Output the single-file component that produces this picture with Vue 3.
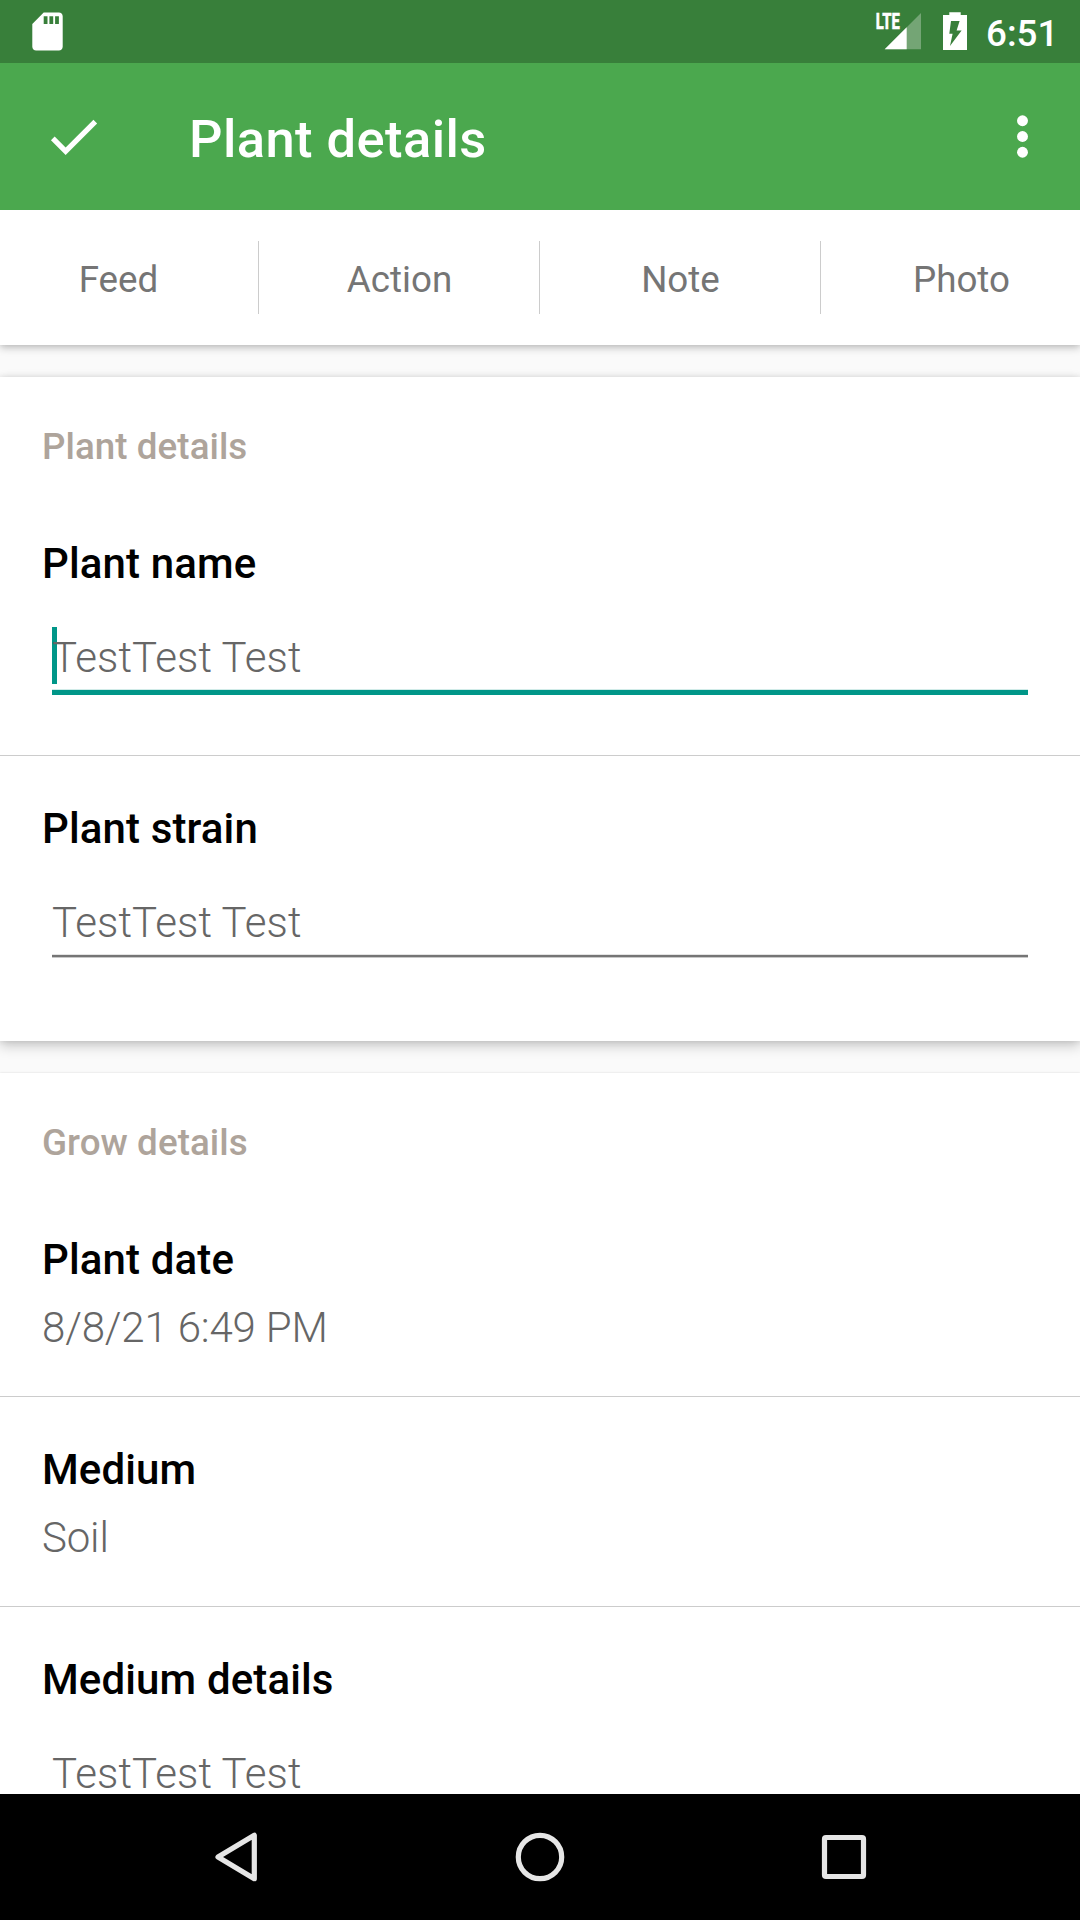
<script setup>
const tabs = ['Feed', 'Action', 'Note', 'Photo']

const sections = [
  {
    title: 'Plant details',
    rows: [
      { label: 'Plant name', value: 'TestTest Test', input: true, focused: true },
      { label: 'Plant strain', value: 'TestTest Test', input: true },
    ],
  },
  {
    title: 'Grow details',
    rows: [
      { label: 'Plant date', value: '8/8/21 6:49 PM' },
      { label: 'Medium', value: 'Soil' },
      { label: 'Medium details', value: 'TestTest Test', input: true },
    ],
  },
]
</script>

<template>
  <div class="screen">
    <header class="status">
      <svg class="sd" viewBox="0 0 46 46">
        <path
          transform="translate(.7 -.3) scale(1.9)"
          d="M18 2h-8L4 8v12c0 1.1.9 2 2 2h12c1.1 0 2-.9 2-2V4c0-1.1-.9-2-2-2zm-6 6h-2V4h2v4zm3 0h-2V4h2v4zm3 0h-2V4h2v4z"
          fill="#fff"
        />
      </svg>
      <div class="indicators">
        <svg class="signal" width="46" height="63" viewBox="0 0 46 63">
          <path d="M46 13V49.3H9.7z" fill="#fff" fill-opacity=".3" />
          <path d="M31.7 27.3V49.3H9.7z" fill="#fff" />
          <text x=".8" y="29" textLength="24" lengthAdjust="spacingAndGlyphs" class="lte">LTE</text>
        </svg>
        <svg class="battery" width="24" height="63" viewBox="0 0 24 63">
          <path fill-rule="evenodd" fill="#fff" d="M6.3 12.3h11.4V15H24v35H0V15h6.300zM8 21L6.3 33.7h3.3L7 46 18.600 30.6h-5L16.600 21z" />
        </svg>
        <span class="clock">6:51</span>
      </div>
    </header>

    <div class="toolbar">
      <svg class="icon" viewBox="0 0 24 24">
        <path d="M9 16.17L4.83 12l-1.42 1.41L9 19 21 7l-1.41-1.41z" fill="#fff" />
      </svg>
      <h1>Plant details</h1>
      <svg class="icon" viewBox="0 0 24 24">
        <g fill="#fff">
          <circle cx="12" cy="6" r="2.08" />
          <circle cx="12" cy="12" r="2.08" />
          <circle cx="12" cy="18" r="2.08" />
        </g>
      </svg>
    </div>

    <nav class="tabs">
      <div v-for="tab in tabs" :key="tab" class="tab">{{ tab }}</div>
    </nav>

    <main class="content">
      <section v-for="section in sections" :key="section.title" class="card">
        <h2>{{ section.title }}</h2>
        <div v-for="row in section.rows" :key="row.label" class="row">
          <div class="label">{{ row.label }}</div>
          <div v-if="row.input" class="field" :class="{ focused: row.focused }">
            <span class="value">{{ row.value }}</span>
          </div>
          <div v-else class="value plain">{{ row.value }}</div>
        </div>
      </section>
    </main>

    <footer class="navbar">
      <svg width="60" height="60" viewBox="0 0 60 60">
        <path d="M48.300 8.300V51.700L12 30z" />
      </svg>
      <svg width="60" height="60" viewBox="0 0 60 60">
        <circle cx="30" cy="30" r="21.7" />
      </svg>
      <svg width="60" height="60" viewBox="0 0 60 60">
        <rect x="10.5" y="10.5" width="39" height="39" rx="1.5" />
      </svg>
    </footer>
  </div>
</template>

<style>
body {
  background: #fafafa;
}
</style>

<style scoped>
.screen {
  width: 1080px;
  height: 1920px;
  display: flex;
  flex-direction: column;
  overflow: hidden;
  background: #fafafa;
  font-family: Roboto, sans-serif;
}

.status {
  flex: none;
  height: 63px;
  display: flex;
  justify-content: space-between;
  background: #387f3a;
}

.sd {
  width: 46px;
  height: 46px;
  margin: 9px 0 0 24px;
}

.indicators {
  display: flex;
  padding-right: 22px;
}

.signal {
  margin-right: 22px;
}

.battery {
  margin-right: 19px;
}

.lte {
  font-size: 22px;
  font-weight: 800;
  fill: #fff;
  stroke: #fff;
  stroke-width: 0.5;
}

.clock {
  width: 72px;
  font-size: 36.75px;
  font-weight: 500;
  line-height: 67px;
  white-space: nowrap;
  color: #fff;
}

.toolbar {
  position: relative;
  z-index: 1;
  flex: none;
  height: 147px;
  display: flex;
  align-items: center;
  padding: 0 26px 0 42px;
  background: #4ba84e;
}

.icon {
  width: 63px;
  height: 63px;
}

h1 {
  flex: 1;
  margin: 0 0 0 84px;
  padding-top: 5px;
  font-size: 52.5px;
  font-weight: 500;
  line-height: 62px;
  letter-spacing: 0.42px;
  color: #fff;
}

.tabs {
  flex: none;
  height: 135px;
  display: flex;
  align-items: center;
  background: #fff;
  box-shadow: 0 3px 8px rgba(0, 0, 0, 0.21), 0 0 6px rgba(0, 0, 0, 0.1);
}

.tab {
  flex: none;
  width: 280px;
  height: 73px;
  text-align: center;
  font-size: 36.75px;
  line-height: 77px;
  text-indent: 1px;
  color: #757575;
  border-left: 1px solid #ccc;
}

.tab:first-child {
  margin-left: -23px;
}

.content {
  flex: 1;
  min-height: 0;
  overflow: hidden;
  display: flex;
  flex-direction: column;
  gap: 32px;
  padding-top: 32px;
}

.card {
  flex: none;
  background: #fff;
  box-shadow: 0 5px 12px rgba(0, 0, 0, 0.2), 0 0 6px rgba(0, 0, 0, 0.11);
}

.card + .card {
  box-shadow: 0 0 2px rgba(0, 0, 0, 0.14);
}

h2 {
  margin: 0;
  padding: 48px 42px 23px;
  font-size: 36.75px;
  font-weight: 500;
  line-height: 43px;
  letter-spacing: 0.06px;
  color: #aea49b;
}

.row {
  padding: 48px 42px 43px;
}

.row + .row {
  border-top: 1px solid #ccc;
}

.row:last-child {
  padding-bottom: 67px;
}

.label {
  font-size: 42px;
  font-weight: 500;
  line-height: 50px;
  letter-spacing: 0.13px;
  color: #000;
}

.value {
  display: block;
  font-size: 42px;
  font-weight: 300;
  line-height: 50px;
  letter-spacing: 0.11px;
  color: #666;
}

.plain {
  margin-top: 18px;
  letter-spacing: -0.16px;
}

.field {
  box-sizing: border-box;
  position: relative;
  height: 60px;
  margin: 44px 10px 16px;
  background: linear-gradient(#e4e4e4 0 1px, #757575 1px 3px, #c8c8c8 3px) bottom / 100% 4px no-repeat;
}

.field.focused {
  height: 62px;
  margin-bottom: 17px;
  background: linear-gradient(#d0ebe8 0 1px, #009688 1px) bottom / 100% 6px no-repeat;
}

.field.focused::before {
  content: '';
  position: absolute;
  left: 0;
  top: -6px;
  width: 5px;
  height: 57px;
  background: #009688;
}

.field .value {
  position: relative;
}

.navbar {
  flex: none;
  height: 126px;
  display: flex;
  align-items: center;
  justify-content: center;
  gap: 244px;
  background: #000;
}

.navbar svg {
  fill: none;
  stroke: #e6e6e6;
  stroke-width: 5.2;
  stroke-linejoin: round;
}
</style>
